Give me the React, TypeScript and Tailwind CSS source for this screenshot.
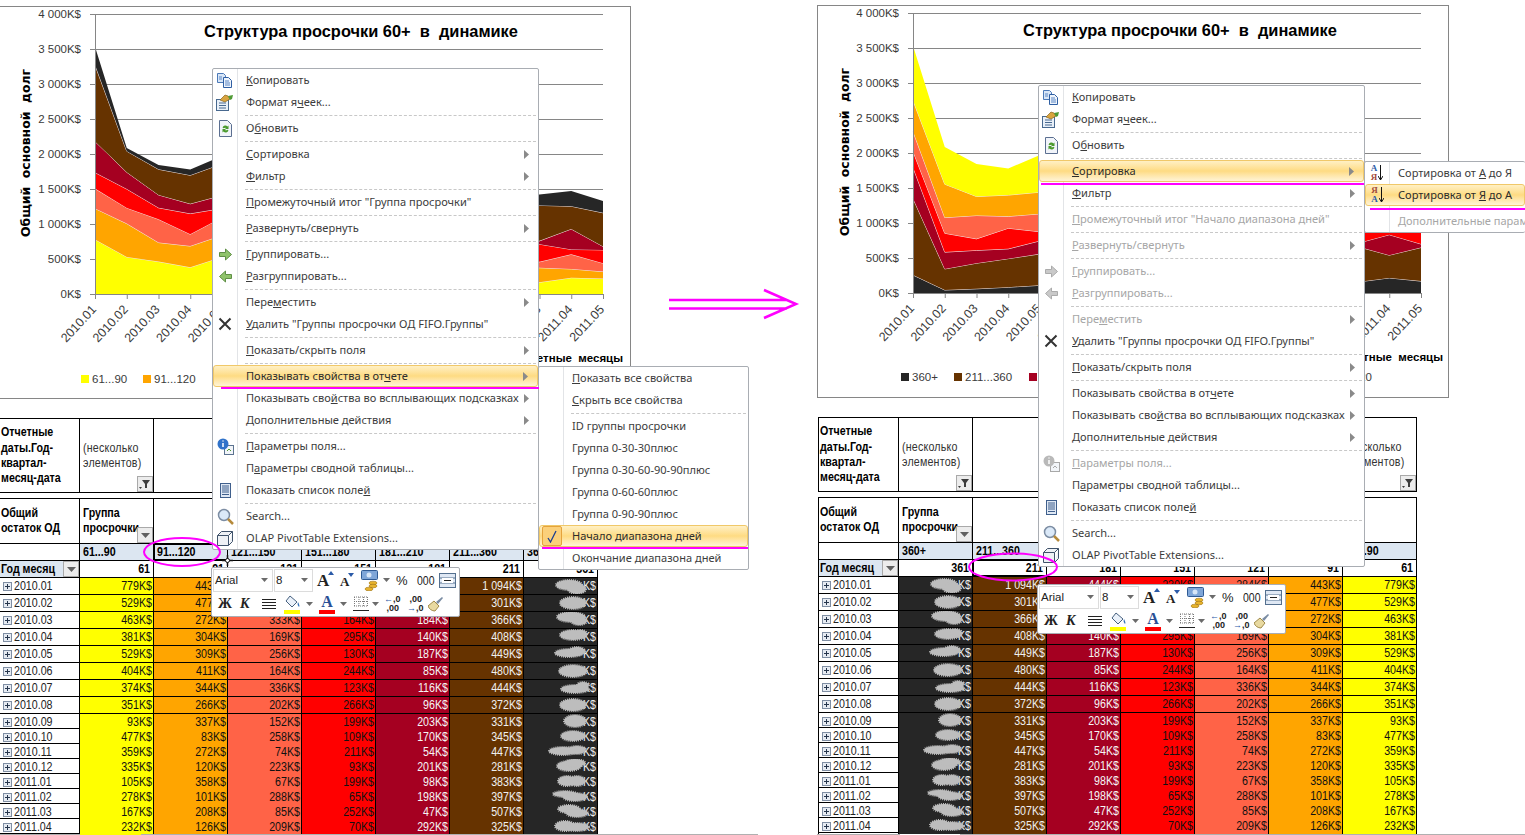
import type { ReactNode } from 'react';

// category axis and the stacked series, bottom series first
const MONTHS = ['2010.01', '2010.02', '2010.03', '2010.04', '2010.05', '2010.06', '2010.07', '2010.08', '2010.09', '2010.10', '2010.11', '2010.12', '2011.01', '2011.02', '2011.03', '2011.04', '2011.05'];

const SERIES = [
  { label: '61...90', total: '61', fill: '#ffff00', bg: 'bg-[#ffff00]', fg: 'text-[#111]', values: [779, 529, 463, 381, 529, 404, 374, 351, 93, 477, 359, 335, 105, 278, 167, 232, 220] },
  { label: '91...120', total: '91', fill: '#ffa500', bg: 'bg-[#ffa500]', fg: 'text-[#111]', values: [443, 477, 272, 304, 309, 411, 344, 266, 337, 83, 272, 120, 358, 101, 208, 126, 100] },
  { label: '121...150', total: '121', fill: '#ff6347', bg: 'bg-[#ff6347]', fg: 'text-[#111]', values: [284, 224, 333, 169, 256, 164, 336, 202, 152, 258, 74, 223, 67, 288, 85, 209, 120] },
  { label: '151...180', total: '151', fill: '#ff0000', bg: 'bg-[#ff0000]', fg: 'text-[#111]', values: [230, 270, 164, 295, 130, 244, 123, 266, 199, 109, 211, 93, 199, 65, 252, 70, 190] },
  { label: '181...210', total: '181', fill: '#a50021', bg: 'bg-[#a50021]', fg: 'text-[#f5f5f5]', values: [444, 240, 184, 140, 187, 85, 116, 96, 203, 170, 54, 201, 98, 198, 47, 292, 50] },
  { label: '211...360', total: '211', fill: '#663300', bg: 'bg-[#663300]', fg: 'text-[#f0f0f0]', values: [1094, 301, 366, 408, 449, 480, 444, 372, 331, 345, 447, 281, 383, 397, 507, 325, 480] },
  { label: '360+', total: '361', fill: '#262626', bg: 'bg-[#262626]', fg: 'text-[#f0f0f0]', values: [257, 43, 60, 83, 110, 95, 120, 90, 100, 140, 110, 90, 120, 90, 157, 216, 170] },
];

// scribbles that hide the 360+ column: cx, cy, rx, ry
const BLOBS: number[][][] = [
  [[42, 7, 13, 5], [50, 11, 9, 5]],
  [[46, 8, 13, 6]],
  [[44, 5, 14, 5], [52, 9, 8, 4]],
  [[46, 6, 13, 5], [54, 5, 6, 4]],
  [[42, 7, 14, 4], [50, 5, 8, 4]],
  [[46, 8, 14, 6]],
  [[48, 9, 14, 4], [56, 5, 6, 3]],
  [[46, 8, 13, 6]],
  [[48, 7, 11, 6]],
  [[46, 7, 12, 5]],
  [[36, 7, 14, 4], [50, 6, 9, 4]],
  [[42, 7, 12, 5], [48, 4, 10, 4]],
  [[40, 7, 9, 5], [50, 7, 8, 5]],
  [[38, 5, 12, 3], [48, 8, 12, 4]],
  [[42, 5, 11, 4], [50, 9, 11, 4]],
  [[38, 7, 10, 5], [50, 8, 12, 4]],
];

const yOf = (v: number) => 287 - v * 0.07;
const xOf = (i: number) => 95 + i * 31.75;

function StackChart({ reversed }: { reversed?: boolean }) {
  const order = reversed ? [...SERIES].reverse() : SERIES;
  const totals = MONTHS.map(() => 0);
  const bands = order.map((s) => {
    const low = totals.slice();
    s.values.forEach((v, i) => (totals[i] += v));
    return { s, low, high: totals.slice() };
  });
  const axis = ['4 000K$', '3 500K$', '3 000K$', '2 500K$', '2 000K$', '1 500K$', '1 000K$', '500K$', '0K$'];
  const txt = "fill-[#3a3a3a] text-[11.5px] font-['Liberation_Sans',sans-serif]";

  return (
    <svg width="630" height="391" className="block">
      {axis.map((label, i) => (
        <g key={label}>
          <line x1="90" x2="603" y1={7.5 + i * 35} y2={7.5 + i * 35} stroke="#868686" />
          <text x="81" y={11 + i * 35} textAnchor="end" className={txt}>{label}</text>
        </g>
      ))}
      {bands.map(({ s, low, high }, n) => {
        const top = high.map((v, i) => `${xOf(i)},${yOf(v)}`);
        const bottom = low.map((v, i) => `${xOf(i)},${yOf(v)}`).reverse();
        return (
          <g key={s.label}>
            <polygon points={[...top, ...bottom].join(' ')} fill={s.fill} />
            {n < bands.length - 1 && <polyline points={top.join(' ')} fill="none" stroke="#f3e6e6" />}
          </g>
        );
      })}
      <line x1="95.5" x2="95.5" y1="7" y2="287" stroke="#868686" />
      <line x1="90" x2="603" y1="287.5" y2="287.5" stroke="#868686" />
      {MONTHS.map((m, i) => (
        <g key={m}>
          <line x1={xOf(i) + 0.5} x2={xOf(i) + 0.5} y1="287" y2="292" stroke="#868686" />
          <text transform={`translate(${xOf(i) + 2} 303) rotate(-47)`} textAnchor="end" className="fill-[#3a3a3a] text-[12.5px] font-['Liberation_Sans',sans-serif]">{m}</text>
        </g>
      ))}
      <text x={reversed ? 362 : 361} y="30" textAnchor="middle" className="fill-black text-[16.4px] font-bold font-['Liberation_Sans',sans-serif]" style={{ whiteSpace: 'pre' }}>Структура просрочки 60+  в  динамике</text>
      <text transform={reversed ? 'translate(31 146) rotate(-90)' : 'translate(30 146) rotate(-90)'} textAnchor="middle" className="fill-black text-[12.4px] font-bold font-['DejaVu_Sans',sans-serif]" style={{ whiteSpace: 'pre' }}>Общий  основной  долг</text>
      <text x={reversed ? 625 : 623} y="355" textAnchor="end" className="fill-black text-[11.5px] font-bold font-['Liberation_Sans',sans-serif]" style={{ whiteSpace: 'pre' }}>Отчетные  месяцы</text>
      {reversed ? (
        <g>
          <rect x="83" y="367" width="8" height="8" fill="#262626" />
          <text x="94" y="375" className={txt}>360+</text>
          <rect x="136" y="367" width="8" height="8" fill="#663300" />
          <text x="147" y="375" className={txt}>211...360</text>
          <rect x="211" y="367" width="8" height="8" fill="#a50021" />
          <text x="554" y="375" textAnchor="end" className={txt}>91...120</text>
        </g>
      ) : (
        <g>
          <rect x="81" y="368" width="8" height="8" fill="#ffff00" />
          <text x="92" y="376" className={txt}>61...90</text>
          <rect x="143" y="368" width="8" height="8" fill="#ffa500" />
          <text x="154" y="376" className={txt}>91...120</text>
        </g>
      )}
    </svg>
  );
}

function FilterBtn({ funnel }: { funnel?: boolean }) {
  return (
    <span className="absolute right-0 bottom-0 flex h-[16px] w-[16px] items-center justify-center border border-[#a9a9a9] bg-[#ececec]">
      {funnel ? (
        <svg width="12" height="12" viewBox="0 0 12 12">
          <path d="M3 2h8L8 6v4H6V6z" fill="#3c3c3c" />
          <path d="M0 9h3L1.500 11z" fill="#3c3c3c" />
        </svg>
      ) : (
        <svg width="9" height="5" viewBox="0 0 9 5">
          <path d="M0 0h9L4.500 5z" fill="#606060" />
        </svg>
      )}
    </span>
  );
}

function Blob({ row }: { row: number }) {
  return (
    <svg width="70" height="15" className="absolute top-0 left-[3px] overflow-visible">
      {BLOBS[row].map(([cx, cy, rx, ry], i) => (
        <ellipse key={i} cx={cx} cy={cy} rx={rx} ry={ry} fill="#bdbdbd" stroke="#bdbdbd" strokeWidth="2" strokeDasharray="1 1" />
      ))}
    </svg>
  );
}

// the screenshot was stretched vertically, the table text shows it most
function Tall({ children }: { children: ReactNode }) {
  return <span className="inline-block -translate-y-px scale-y-[1.16]">{children}</span>;
}

function PivotTable({ reversed }: { reversed?: boolean }) {
  const cols = reversed ? [...SERIES].reverse() : SERIES;
  const grid = 'grid grid-cols-[81px_repeat(7,74px)]';
  const selected = 1;

  return (
    <div className={`w-[599px] text-[10.67px] text-black font-['Liberation_Sans',sans-serif] ${reversed ? 'ml-px' : ''}`}>
      <div className={`${grid} h-[75px] border-t border-b border-black`}>
        <div className="flex items-center border-x border-black pl-px pt-px font-bold leading-[13px]">
          <Tall>Отчетные<br />даты.Год-<br />квартал-<br />месяц-дата</Tall>
        </div>
        <div className="relative flex items-center border-r border-black pl-[3px] leading-[13px] tracking-[0.2px] text-[#333]">
          <Tall>(несколько<br />элементов)</Tall>
          <FilterBtn funnel />
        </div>
        <div className="col-span-5 border-r border-black" />
        <div className="relative flex items-center border-r border-black pl-[3px] leading-[13px] tracking-[0.2px] text-[#333]">
          <Tall>(несколько<br />элементов)</Tall>
          <FilterBtn funnel />
        </div>
      </div>
      <div className="h-[5px]" />
      <div className={`${grid} h-[46px] border-t border-b border-black`}>
        <div className="flex items-center border-x border-black pl-px font-bold leading-[13px]">
          <Tall>Общий<br />остаток ОД</Tall>
        </div>
        <div className="relative flex items-center overflow-hidden border-r border-black pl-[3px] font-bold leading-[13px]">
          <Tall>Группа<br />просрочки</Tall>
          <FilterBtn />
        </div>
        <div className="col-span-6 border-r border-black" />
      </div>
      <div className={`${grid} h-[17px] border-b border-black font-bold`}>
        <div className="border-x border-black" />
        {cols.map((c, i) => (
          <div key={c.label} className={`flex items-center border-r border-black bg-[#dce6f1] pl-[3px] ${!reversed && i === selected ? 'outline outline-1 -outline-offset-1 outline-black' : ''}`}>
            <Tall>{c.label}</Tall>
          </div>
        ))}
      </div>
      <div className={`${grid} h-[17px] border-b border-black font-bold`}>
        <div className="relative flex items-center border-x border-black bg-[#dce6f1] pl-px">
          <Tall>Год месяц</Tall>
          <FilterBtn />
        </div>
        {cols.map((c, i) => (
          <div key={c.label} className={`flex items-center justify-end border-r border-black pr-[3px] ${reversed && i === selected ? 'outline outline-1 -outline-offset-1 outline-black' : ''}`}>
            <Tall>{c.total}</Tall>
          </div>
        ))}
      </div>
      {MONTHS.slice(0, 16).map((m, r) => (
        <div key={m} className={`${grid} ${r < 8 ? 'h-[17px]' : 'h-[15px]'} border-b border-black`}>
          <div className="flex items-center gap-[2px] border-x border-black pl-[3px] text-[#222]">
            <span className="flex h-[9px] w-[9px] items-center justify-center border border-[#7f8ea3] bg-[#e6ebf2]">
              <svg width="7" height="7" viewBox="0 0 7 7">
                <path d="M1 3.500h5M3.500 1v5" stroke="#26364d" />
              </svg>
            </span>
            <Tall>{m}</Tall>
          </div>
          {cols.map((c) => (
            <div key={c.label} className={`relative flex items-center justify-end overflow-hidden border-r border-black pr-px ${c.bg} ${c.fg}`}>
              <Tall>{c.total === '361' ? 'K$' : `${c.values[r] >= 1000 ? '1 0' + String(c.values[r]).slice(2) : c.values[r]}K$`}</Tall>
              {c.total === '361' && <Blob row={r} />}
            </div>
          ))}
        </div>
      ))}
    </div>
  );
}

/* ---------- menu icons ---------- */

function CopyIcon() {
  return (
    <svg width="18" height="16" viewBox="0 0 18 16">
      <path d="M1.500 1.500h6l2 2v7h-8z" fill="#d8e6f7" stroke="#4b79b8" />
      <path d="M7.500 5.500h5l3 3v7h-8z" fill="#eef4fc" stroke="#2f5fa3" />
      <path d="M9 9h4M9 11h5M9 13h5M3 5h3M3 7h3" stroke="#5a86c4" />
    </svg>
  );
}
function FormatIcon() {
  return (
    <svg width="18" height="17" viewBox="0 0 18 17">
      <rect x="0.500" y="5.500" width="12" height="11" fill="#e9f0f8" stroke="#48698f" />
      <path d="M3 9h7M3 11.500h7M3 14h7" stroke="#48698f" />
      <path d="M4 6l5-5 3 1 2 3-5 3z" fill="#d9a43f" stroke="#8a6420" strokeWidth="0.700" />
      <path d="M12 2l5-1-1 4-2 1z" fill="#4f9a35" />
    </svg>
  );
}
function RefreshIcon() {
  return (
    <svg width="15" height="17" viewBox="0 0 15 17">
      <path d="M1.500 0.500h8l4 4v12h-12z" fill="#f1f4fa" stroke="#5b6f91" />
      <path d="M4.500 7.500a3 3 0 0 1 5-1l1-1v3.500H7l1-1a2 2 0 0 0-2.300.3zM10.500 10.500a3 3 0 0 1-5 1l-1 1V9H8l-1 1a2 2 0 0 0 2.300-.3z" fill="#4b9a2e" />
    </svg>
  );
}
function ArrowIcon({ left, off }: { left?: boolean; off?: boolean }) {
  return (
    <svg width="13" height="13" viewBox="0 0 13 13" className={left ? '-scale-x-100' : ''}>
      <path d="M0.500 4.500h6V1l6 5.500-6 5.500V8.500h-6z" fill={off ? '#c9c9c9' : '#8fc36a'} stroke={off ? '#ababab' : '#5f8f46'} />
    </svg>
  );
}
function CrossIcon() {
  return (
    <svg width="14" height="14" viewBox="0 0 14 14">
      <path d="M1.500 1.500l11 11M12.500 1.500l-11 11" stroke="#333" strokeWidth="2" />
    </svg>
  );
}
function InfoIcon({ off }: { off?: boolean }) {
  return (
    <svg width="17" height="17" viewBox="0 0 17 17">
      <rect x="7.500" y="7.500" width="9" height="9" fill="#f2f5f9" stroke={off ? '#a8a8a8' : '#5c7390'} />
      <circle cx="6" cy="6" r="5.500" fill={off ? '#b9b9b9' : '#2f72c9'} />
      <path d="M6 2.500v1M6 5v4" stroke="#fff" strokeWidth="1.500" />
      <path d="M10 13l2-2 2 2" fill="none" stroke={off ? '#a8a8a8' : '#4b9a2e'} />
    </svg>
  );
}
function ListIcon() {
  return (
    <svg width="11" height="15" viewBox="0 0 11 15">
      <rect x="0.500" y="0.500" width="10" height="14" fill="#dfe8f4" stroke="#3f5f8c" />
      <path d="M2 3h7M2 5h7M2 7h7M2 9h7M2 11.500h7" stroke="#3f5f8c" />
    </svg>
  );
}
function SearchIcon() {
  return (
    <svg width="17" height="17" viewBox="0 0 17 17">
      <circle cx="7" cy="7" r="5.500" fill="#dbe9f8" stroke="#7c8da3" strokeWidth="1.500" />
      <path d="M11 11l5 5" stroke="#b58a3c" strokeWidth="2.500" />
    </svg>
  );
}
function BoxIcon() {
  return (
    <svg width="16" height="15" viewBox="0 0 16 15">
      <path d="M0.500 4.500h11v10h-11zM0.500 4.500l4-4h11l-4 4M11.500 14.500l4-4v-10" fill="#eef1f5" stroke="#40536b" />
    </svg>
  );
}
function SortIcon({ desc }: { desc?: boolean }) {
  const a = 'text-[#2b5aa5]';
  const b = 'text-[#a14a3a]';
  return (
    <span className="flex items-center gap-[1px]">
      <span className="flex flex-col text-[9px] leading-[9px] font-bold font-['Liberation_Serif',serif]">
        <span className={desc ? b : a}>{desc ? 'Я' : 'А'}</span>
        <span className={desc ? a : b}>{desc ? 'А' : 'Я'}</span>
      </span>
      <svg width="5" height="16" viewBox="0 0 5 16">
        <path d="M2.500 0v15M0 11l2.500 4L5 11" fill="none" stroke="#111" />
      </svg>
    </span>
  );
}
function CheckBox() {
  return (
    <span className="flex h-[20px] w-[20px] items-center justify-center rounded-[2px] border border-[#e5a33c] bg-[#fbd07a]">
      <svg width="10" height="13" viewBox="0 0 10 13">
        <path d="M1 8l2.500 4L9 1" fill="none" stroke="#1d3f8f" strokeWidth="1.300" />
      </svg>
    </span>
  );
}

/* ---------- menus ---------- */

type Item = { label?: string; icon?: ReactNode; arrow?: boolean; off?: boolean; hot?: boolean };

// "&" marks the accelerator letter, as in the Office resource strings
function Label({ text }: { text: string }) {
  const at = text.indexOf('&');
  if (at < 0) return <span style={{ whiteSpace: 'pre' }}>{text}</span>;
  return (
    <span style={{ whiteSpace: 'pre' }}>
      {text.slice(0, at)}
      <u>{text[at + 1]}</u>
      {text.slice(at + 2)}
    </span>
  );
}

function Menu({ items, pos, gutter, cut }: { items: Item[]; pos: string; gutter: string; cut?: boolean }) {
  return (
    <div className={`absolute z-10 ${pos} rounded-[2px] border border-[#a9adb3] bg-white text-[11.05px] text-[#3c3c3c] font-['Noto_Sans',sans-serif] ${cut ? 'border-r-0' : ''}`}>
      {items.map((it, i) =>
        it.label === undefined ? (
          <div key={i} className="flex h-[4px]">
            <div className={`${gutter} border-r border-[#e2e4e7]`} />
            <div className="mr-[2px] ml-[7px] flex-1 self-center border-t border-dashed border-[#c8c8c8]" />
          </div>
        ) : it.hot ? (
          <div key={i} className="flex h-[22px] items-center rounded-[3px] border border-[#f0c869] bg-gradient-to-b from-[#fff0c4] via-[#fedb82] to-[#fff4d6] text-[#2c2c2c]">
            <div className={`${gutter} -ml-px flex shrink-0 items-center justify-center`}>{it.icon}</div>
            <div className="flex-1 pl-2"><Label text={it.label} /></div>
            {it.arrow && <Arrow />}
          </div>
        ) : (
          <div key={i} className={`flex h-[22px] items-center ${it.off ? 'text-[#a6a6a6]' : ''}`}>
            <div className={`${gutter} flex h-full shrink-0 items-center justify-center border-r border-[#e2e4e7]`}>{it.icon}</div>
            <div className="flex-1 pl-2"><Label text={it.label} /></div>
            {it.arrow && <Arrow />}
          </div>
        ),
      )}
    </div>
  );
}

function Arrow() {
  return (
    <svg width="5" height="9" viewBox="0 0 5 9" className="mr-[9px] shrink-0">
      <path d="M0 0l5 4.500L0 9z" fill="#8a8a8a" />
    </svg>
  );
}

const SEP: Item = {};

function mainItems(right: boolean): Item[] {
  return [
    { label: '&Копировать', icon: <CopyIcon /> },
    { label: 'Формат я&чеек...', icon: <FormatIcon /> },
    SEP,
    { label: 'О&бновить', icon: <RefreshIcon /> },
    SEP,
    { label: '&Сортировка', arrow: true, hot: right },
    { label: '&Фильтр', arrow: true },
    SEP,
    { label: right ? '&Промежуточный итог "Начало диапазона дней"' : '&Промежуточный итог "Группа просрочки"', off: right },
    SEP,
    { label: '&Развернуть/свернуть', arrow: true, off: right },
    SEP,
    { label: '&Группировать...', icon: <ArrowIcon off={right} />, off: right },
    { label: '&Разгруппировать...', icon: <ArrowIcon left off={right} />, off: right },
    SEP,
    { label: 'Пере&местить', arrow: true, off: right },
    { label: '&Удалить "Группы просрочки ОД FIFO.Группы"', icon: <CrossIcon /> },
    SEP,
    { label: '&Показать/скрыть поля', arrow: true },
    SEP,
    { label: 'Показывать свойства в от&чете', arrow: true, hot: !right },
    { label: 'Показывать сво&йства во всплывающих подсказках', arrow: true },
    { label: '&Дополнительные действия', arrow: true },
    SEP,
    { label: '&Параметры поля...', icon: <InfoIcon off={right} />, off: right },
    { label: 'П&араметры сводной таблицы...' },
    { label: 'Показать список поле&й', icon: <ListIcon /> },
    SEP,
    { label: 'Search...', icon: <SearchIcon /> },
    { label: 'OLAP PivotTable Extensions...', icon: <BoxIcon /> },
  ];
}

const PROPS_MENU: Item[] = [
  { label: '&Показать все свойства' },
  { label: '&Скрыть все свойства' },
  SEP,
  { label: 'ID группы просрочки' },
  { label: 'Группа 0-30-30плюс' },
  { label: 'Группа 0-30-60-90-90плюс' },
  { label: 'Группа 0-60-60плюс' },
  { label: 'Группа 0-90-90плюс' },
  { label: 'Начало диапазона дней', icon: <CheckBox />, hot: true },
  { label: 'Окончание диапазона дней' },
];

const SORT_MENU: Item[] = [
  { label: 'Сортировка от &А до Я', icon: <SortIcon /> },
  { label: 'Сортировка от &Я до А', icon: <SortIcon desc />, hot: true },
  SEP,
  { label: '&Дополнительные парам', off: true },
];

/* ---------- mini toolbar ---------- */

function Caret({ className = '' }: { className?: string }) {
  return (
    <svg width="7" height="4" viewBox="0 0 7 4" className={`shrink-0 ${className}`}>
      <path d="M0 0h7L3.500 4z" fill="#6b6b6b" />
    </svg>
  );
}

function MiniToolbar({ pos }: { pos: string }) {
  const serif = "font-['Liberation_Serif',serif] font-bold";
  return (
    <div className={`absolute z-[5] ${pos} flex h-[50px] w-[249px] flex-col rounded-[2px] border border-[#a9adb3] bg-white text-[#222] font-['Liberation_Sans',sans-serif]`}>
      <div className="flex h-[25px] items-center pl-px">
        <div className="flex h-[23px] w-[60px] items-center justify-between bg-white pr-[5px] pl-[2px] text-[11.5px] outline outline-1 -outline-offset-1 outline-[#dcdcdc]">
          Arial <Caret />
        </div>
        <div className="ml-px flex h-[23px] w-[39px] items-center justify-between pr-[5px] pl-[2px] text-[11.5px] outline outline-1 -outline-offset-1 outline-[#dcdcdc]">
          8 <Caret />
        </div>
        <div className={`relative ml-[4px] w-[15px] text-[17px] leading-none ${serif}`}>
          A
          <svg width="6" height="4" viewBox="0 0 6 4" className="absolute -top-px -right-[2px]"><path d="M0 4h6L3 0z" fill="#2a5aa8" /></svg>
        </div>
        <div className={`relative ml-[8px] w-[13px] pt-[2px] text-[13px] leading-none ${serif}`}>
          A
          <svg width="6" height="4" viewBox="0 0 6 4" className="absolute top-0 -right-[1px]"><path d="M0 0h6L3 4z" fill="#2a5aa8" /></svg>
        </div>
        <svg width="17" height="21" viewBox="0 0 17 21" className="ml-[8px]">
          <rect x="0.500" y="0.500" width="16" height="9" rx="1" fill="#7fa6d8" stroke="#2f5a94" />
          <circle cx="8" cy="5" r="2.500" fill="#d8e6f7" />
          <ellipse cx="12" cy="13" rx="4" ry="1.800" fill="#e7b32d" stroke="#a07414" strokeWidth="0.600" />
          <ellipse cx="12" cy="16" rx="4" ry="1.800" fill="#e7b32d" stroke="#a07414" strokeWidth="0.600" />
          <ellipse cx="8" cy="19" rx="4" ry="1.800" fill="#e7b32d" stroke="#a07414" strokeWidth="0.600" />
        </svg>
        <Caret className="ml-[5px]" />
        <div className="ml-[6px] w-[12px] text-[13px] leading-none">%</div>
        <div className="ml-[9px] w-[17px] scale-y-125 text-[10.5px] leading-none">000</div>
        <svg width="17" height="15" viewBox="0 0 17 15" className="ml-[5px]">
          <rect x="0.500" y="0.500" width="16" height="14" fill="#dfe8f4" stroke="#54708f" />
          <path d="M1 5h15M1 10h15" stroke="#54708f" />
          <rect x="3" y="5" width="11" height="5" fill="#fff" />
          <path d="M5 7.500h7" stroke="#222" />
        </svg>
      </div>
      <div className="flex h-[24px] items-center pl-[6px]">
        <div className={`w-[13px] text-[14px] leading-none ${serif}`}>Ж</div>
        <div className={`ml-[9px] w-[12px] text-[14px] leading-none italic ${serif}`}>К</div>
        <svg width="14" height="12" viewBox="0 0 14 12" className="ml-[10px]">
          <path d="M0 1.500h14M0 4.500h14M0 7.500h14M0 10.500h14" stroke="#222" strokeWidth="1.200" />
        </svg>
        <svg width="16" height="19" viewBox="0 0 16 19" className="ml-[8px]">
          <path d="M6 1l7 6-5 5-6-6z" fill="#eaf1fa" stroke="#47617f" />
          <path d="M14 7c1 2 2 4 1 5-1-1-2-3-1-5z" fill="#2f6fb8" />
          <rect x="0" y="15" width="16" height="4" fill="#ffff00" />
        </svg>
        <Caret className="ml-[6px]" />
        <div className="ml-[6px] flex w-[16px] flex-col items-center">
          <span className={`text-[16px] leading-[14px] text-[#2a4f96] ${serif}`}>A</span>
          <span className="mt-px h-[4px] w-[16px] bg-[#ff0000]" />
        </div>
        <Caret className="ml-[5px]" />
        <svg width="16" height="16" viewBox="0 0 16 16" className="ml-[6px]">
          <path d="M1 1h14M1 5.500h14M1 10h14M1.500 1v10M6 1v10M10.500 1v10M14.500 1v10" stroke="#7a7a7a" strokeDasharray="1 1" />
          <path d="M0 14.500h16" stroke="#222" />
        </svg>
        <Caret className="ml-[3px]" />
        <div className="ml-[5px] w-[15px] text-right text-[9px] leading-[9px] font-bold">
          <span className="text-[#2a5aa8]">←</span>,0<br />,00
        </div>
        <div className="ml-[8px] w-[15px] text-right text-[9px] leading-[9px] font-bold">
          ,00<br /><span className="text-[#2a5aa8]">→</span>,0
        </div>
        <svg width="16" height="16" viewBox="0 0 16 16" className="ml-[6px]">
          <path d="M0 10l6-5 5 5-4 5c-3 0-6-2-7-5z" fill="#e8d9a0" stroke="#a08a4a" />
          <path d="M8 6l6-5 1 1-5 6z" fill="#7a8ca3" />
        </svg>
      </div>
    </div>
  );
}

function Panel({ reversed }: { reversed?: boolean }) {
  return (
    <div className="w-[632px] shrink-0">
      <div className="mt-[5px] h-[393px] w-[632px] border border-[#868686] bg-white">
        <StackChart reversed={reversed} />
      </div>
      <div className="mt-[19px]">
        <PivotTable reversed={reversed} />
      </div>
    </div>
  );
}

export default function App() {
  return (
    <div className="relative flex h-[835px] w-[1525px] overflow-hidden bg-white">
      <div className="-ml-px pt-px">
        <Panel />
      </div>

      <div className="w-[186px] shrink-0 pt-[287px] pl-[38px]">
        <svg width="130" height="34" viewBox="0 0 130 34" className="overflow-visible">
          <path d="M0 13h118M0 21.500h118M95 3l32 14-32 14" fill="none" stroke="#ff00ff" strokeWidth="2.500" />
        </svg>
      </div>

      <Panel reversed />

      {/* gray line along the bottom of the shot */}
      <div className="absolute bottom-0 left-0 h-px w-[80px] bg-[#b0b0b0]" />
      <div className="absolute bottom-0 left-[141px] h-px w-[617px] bg-[#b0b0b0]" />
      <div className="absolute bottom-0 left-[817px] h-px w-[83px] bg-[#b0b0b0]" />
      <div className="absolute bottom-0 left-[960px] h-px w-[565px] bg-[#b0b0b0]" />

      {/* left window overlays */}
      <MiniToolbar pos="left-[211px] top-[567px]" />
      <Menu items={mainItems(false)} pos="left-[212px] top-[68px] w-[327px]" gutter="w-[25px]" />
      <Menu items={PROPS_MENU} pos="left-[538px] top-[366px] w-[211px] z-20" gutter="w-[25px]" />

      {/* right window overlays */}
      <MiniToolbar pos="left-[1037px] top-[584px]" />
      <Menu items={mainItems(true)} pos="left-[1038px] top-[85px] w-[327px]" gutter="w-[25px]" />
      <Menu items={SORT_MENU} pos="left-[1364px] top-[161px] w-[161px] z-20" gutter="w-[25px]" cut />

      {/* magenta marks drawn over the shot */}
      <div className="absolute top-[387px] left-[221px] z-30 h-[2px] w-[318px] bg-[#ff00ff]" />
      <div className="absolute top-[547px] left-[542px] z-30 h-[2px] w-[206px] bg-[#ff00ff]" />
      <div className="absolute top-[183px] left-[1041px] z-30 h-[2px] w-[323px] bg-[#ff00ff]" />
      <div className="absolute top-[208px] left-[1370px] z-30 h-[2px] w-[155px] bg-[#ff00ff]" />
      <svg width="80" height="32" viewBox="0 0 80 32" className="absolute top-[536px] left-[142px] z-30">
        <ellipse cx="40" cy="16" rx="38" ry="14" fill="none" stroke="#ff00ff" strokeWidth="2" />
      </svg>
      <svg width="92" height="32" viewBox="0 0 92 32" className="absolute top-[552px] left-[967px] z-30">
        <ellipse cx="46" cy="15" rx="44" ry="13.500" fill="none" stroke="#ff00ff" strokeWidth="2" />
      </svg>

      {/* fill-handle cursor */}
      <svg width="11" height="11" viewBox="0 0 11 11" className="absolute top-[555px] left-[222px] z-[6]">
        <path d="M5.500 0v11M0 5.500h11" stroke="#111" strokeWidth="1.500" />
        <circle cx="5.500" cy="5.500" r="2" fill="#fff" stroke="#111" />
      </svg>
    </div>
  );
}
